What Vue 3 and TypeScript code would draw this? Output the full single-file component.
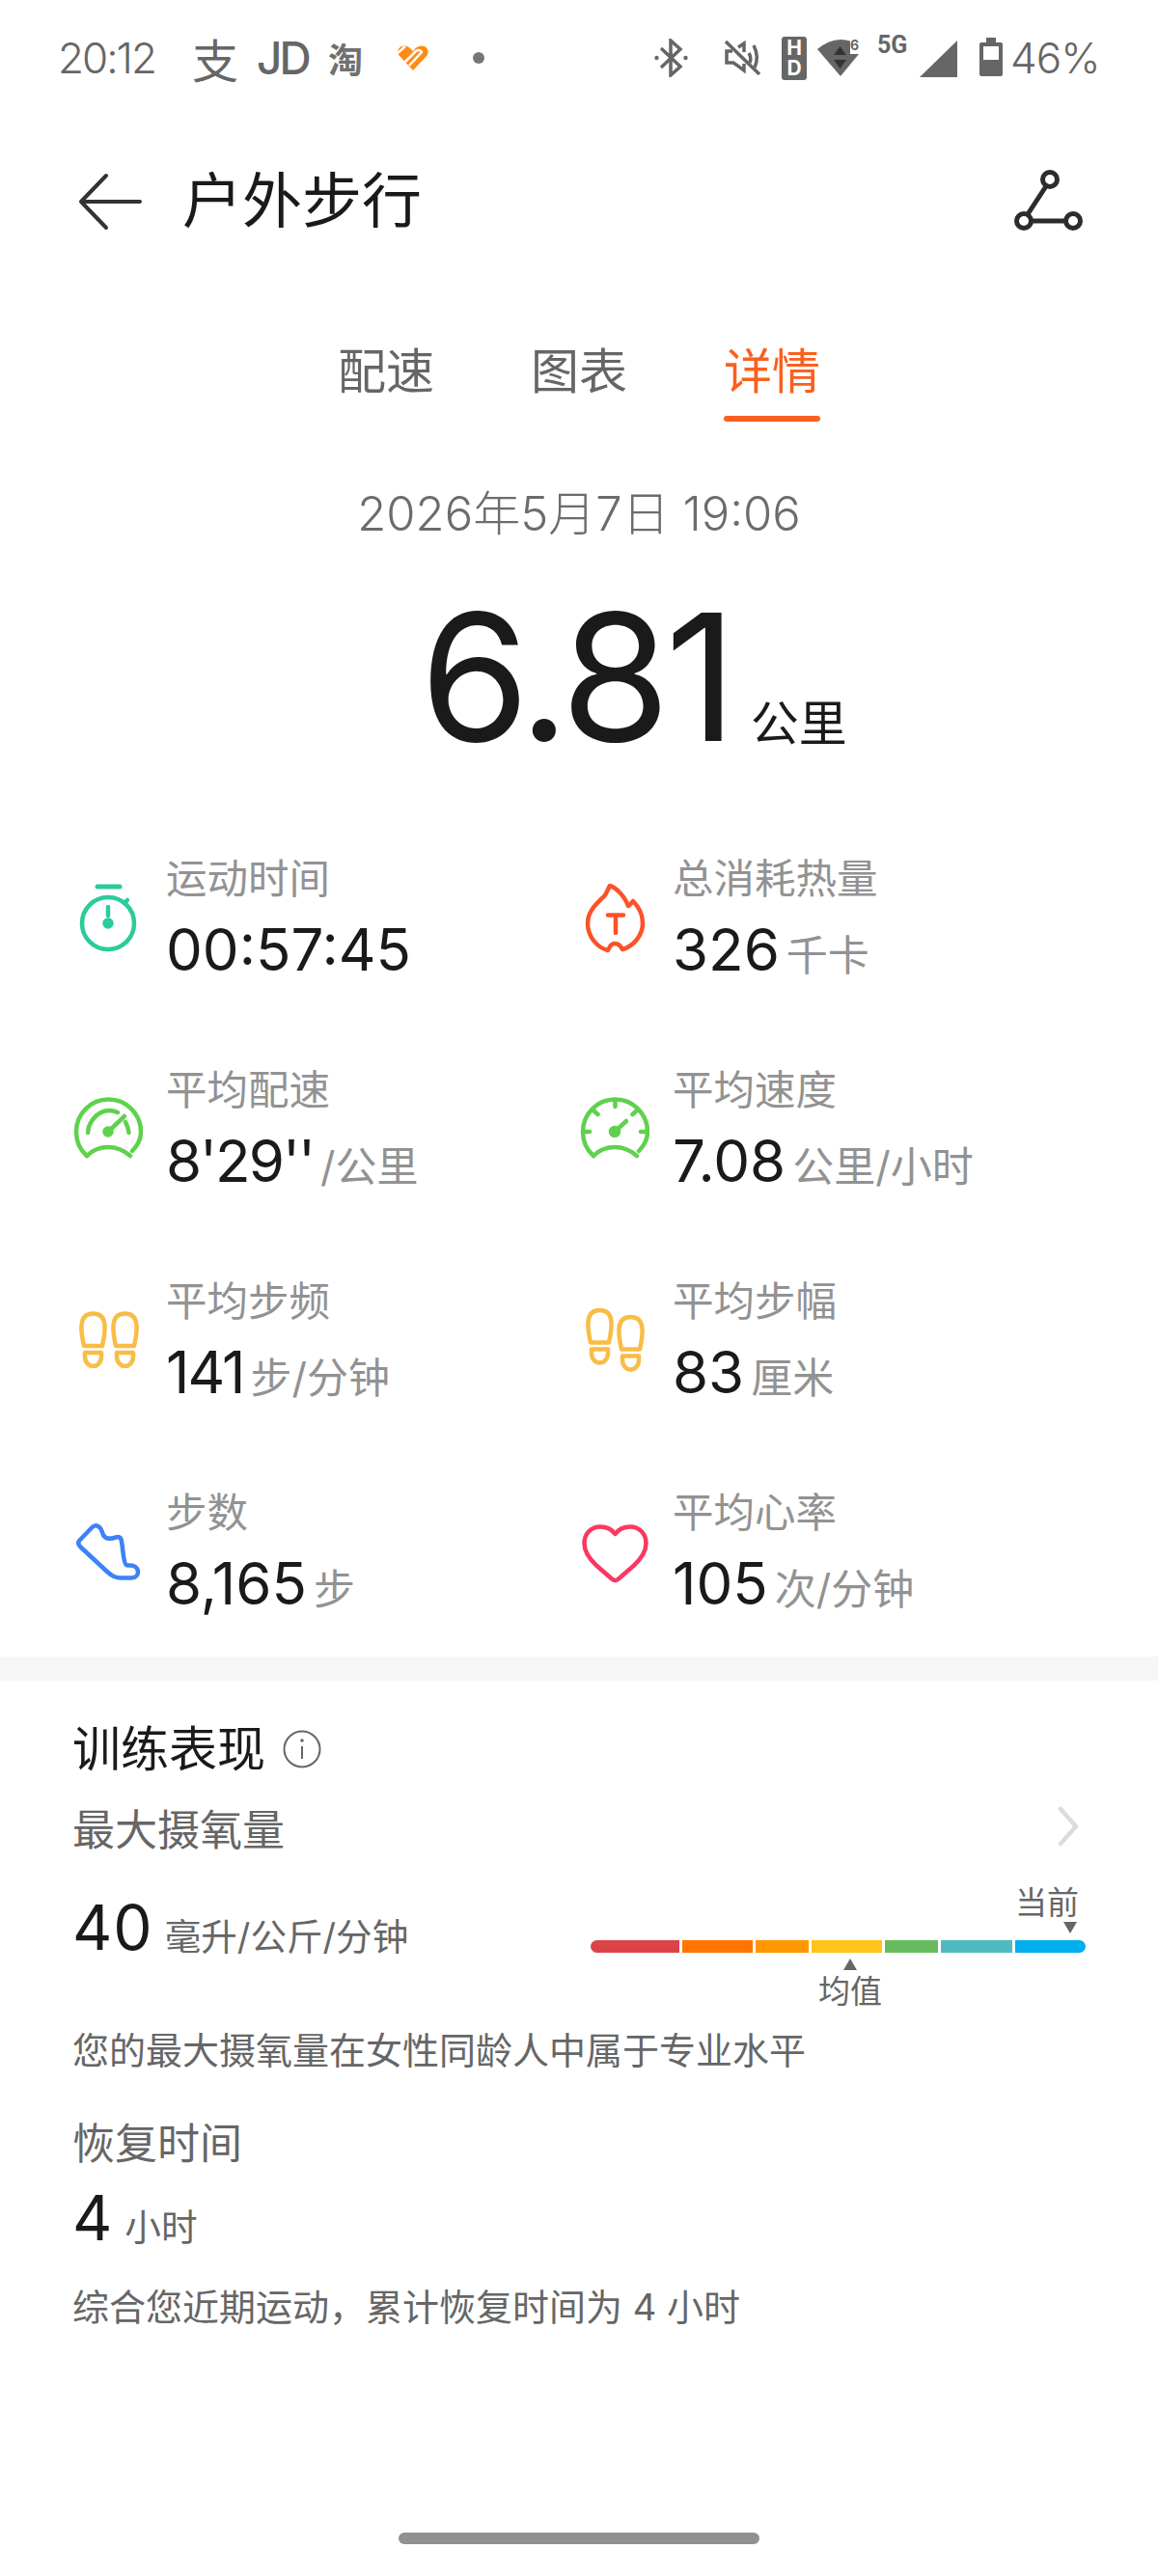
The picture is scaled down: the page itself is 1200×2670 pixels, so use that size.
<template>
  <div class="page">
    <!-- 状态栏 -->
    <div class="status">
      <div class="status-left">
        <span class="time">20:12</span>
        <span class="app-zhi">支</span>
        <span class="app-jd">JD</span>
        <span class="app-tao">淘</span>
        <svg class="app-heart" width="32" height="26" viewBox="0 0 32 26">
          <path d="M16 26 2 11C-2 6 2 .5 7 .5c3 0 5 1.500 7 3.500l2 2 2.500-3C20.500 1.500 22.500.5 25 .5c5 0 9 5.500 5 10.500z" fill="#ff8a14" />
          <path d="M-1 9 8 1M5 20 19 6c2-2 5-1 6 1L12 21" fill="none" stroke="#fff" stroke-width="2.500" />
        </svg>
        <span class="app-dot"></span>
      </div>
      <div class="status-right">
        <svg class="ic-bt" width="35" height="40" viewBox="0 0 35 40" fill="none" stroke="#666" stroke-width="3.500">
          <path d="M7 10 27 29 17 38V2l10 9L7 30" />
          <circle cx="2.500" cy="20" r="2.200" fill="#666" stroke="none" />
          <circle cx="32.500" cy="20" r="2.200" fill="#666" stroke="none" />
        </svg>
        <svg class="ic-mute" width="38" height="36" viewBox="0 0 38 36" fill="none" stroke="#666" stroke-width="3.500">
          <path d="M1 1 36 35" />
          <path d="M8 11H2V23H9L20 31V24M14 7l6-4V12" />
          <path d="M25 13q3 5 1 10M30 5q6 12 1 23" />
        </svg>
        <div class="ic-hd"><span>H</span><span>D</span></div>
        <svg class="ic-wifi" width="46" height="42" viewBox="0 0 46 42">
          <path d="M0 12Q12 2 24 2q6 0 10 1.500V17h9L24 40z" fill="#666" />
          <path d="M17 18 23.500 9 30 18zM17 23H30L23.500 32z" fill="#333" />
          <text x="34" y="13" class="wifi-six">6</text>
        </svg>
        <span class="ic-5g">5G</span>
        <svg class="ic-signal" width="39" height="38" viewBox="0 0 39 38"><path d="M0 38 39 0V38z" fill="#666" /></svg>
        <svg class="ic-batt" width="24" height="40" viewBox="0 0 24 40">
          <path d="M7 0H17V5H22q2 0 2 2V38q0 2-2 2H2q-2 0-2-2V7q0-2 2-2H7z" fill="#666" />
          <rect x="4" y="9" width="16" height="14" fill="#fff" />
        </svg>
        <span class="batt-text">46%</span>
      </div>
    </div>

    <!-- 标题栏 -->
    <div class="header">
      <svg class="back" width="66" height="60" viewBox="0 0 66 60" fill="none" stroke="#333" stroke-width="4" stroke-linecap="round" stroke-linejoin="round">
        <path d="M64 30H3M29 3 3 30l26 27" />
      </svg>
      <span class="title">户外步行</span>
      <svg class="route" width="72" height="72" viewBox="0 0 72 72" fill="none" stroke="#2c2c2c" stroke-width="5">
        <circle cx="38" cy="13" r="7.500" />
        <circle cx="11" cy="56" r="7.500" />
        <circle cx="62" cy="56" r="7.500" />
        <path d="M34 20 15 49M19 56H54" />
      </svg>
    </div>

    <!-- 标签 -->
    <div class="tabs">
      <div v-for="tab in tabs" :key="tab" class="tab" :class="{ active: tab === '详情' }">
        <span>{{ tab }}</span>
        <i class="tab-line"></i>
      </div>
    </div>

    <div class="date">2026年5月7日 19:06</div>
    <div class="hero">
      <span class="hero-num">6.81</span>
      <span class="hero-unit">公里</span>
    </div>

    <!-- 数据网格 -->
    <div class="grid">
      <div v-for="m in metrics" :key="m.label" class="cell">
        <svg class="cell-icon" width="72" height="72" viewBox="0 0 72 72" fill="none" stroke-linecap="round" stroke-linejoin="round">
          <g v-if="m.icon === 'timer'" stroke="#2ccb9b" stroke-width="4.500">
            <path d="M25 3H48" stroke-width="5" />
            <circle cx="36" cy="41" r="27" />
            <path d="M53 20l3-3M36 24v9" />
            <circle cx="36" cy="41" r="3.500" fill="#2ccb9b" />
          </g>
          <g v-else-if="m.icon === 'flame'" stroke="#fb5229" stroke-width="4.500">
            <path d="M31 2C36 3 46 12 50 23 52 22 53 20 55 18 61 24 65 32 65 41 65 54 55 65 44 68 42 64 39 62 36 62 33 62 31 64 29 69 17 66 8 54 8 41 8 28 18 20 25 13 28 10 29 5 31 2Z" />
            <path d="M29 32.500H45M37 32.500V51" />
          </g>
          <g v-else-if="m.icon === 'pace'" stroke="#5fd14d" stroke-width="4.500">
            <path d="M14 63C6 56 3 47 3 38a33.500 33.500 0 0 1 67 0C70 46 67 52 61 58" />
            <path d="M14 63C20 57 28 54 36 54S52 57 59 63" />
            <path d="M15 39C16 27 25 17 36 16 39 16 43 16.500 46 18M54 28Q57 33 57.500 39" />
            <path d="M36 38 53 22" />
            <circle cx="36" cy="38" r="3.500" fill="#5fd14d" />
          </g>
          <g v-else-if="m.icon === 'speed'" stroke="#5fd14d" stroke-width="4.500">
            <path d="M14 63C6 56 3 47 3 38a33.500 33.500 0 0 1 67 0C70 46 67 52 61 58" />
            <path d="M14 63C20 57 28 54 36 54S52 57 59 63" />
            <path d="M36.500 5v7M14 16l4.500 4M59 16l-4.500 4M3 38h7M70 38h-7" />
            <path d="M36 38 48 27" />
            <circle cx="36" cy="38" r="4" fill="#5fd14d" />
          </g>
          <g v-else-if="m.icon === 'steps'" stroke="#f8bd46" stroke-width="4.500">
            <g>
              <path d="M11 41C9 32 8 26 8.500 20 9 11 14 7.500 20.500 7.500S32 11 32.500 20C33 26 32 32 30 41Z" />
              <path d="M12 48H29V52C29 58 25 62 20.500 62S12 58 12 52Z" />
            </g>
            <g transform="translate(33 0)">
              <path d="M11 41C9 32 8 26 8.500 20 9 11 14 7.500 20.500 7.500S32 11 32.500 20C33 26 32 32 30 41Z" />
              <path d="M12 48H29V52C29 58 25 62 20.500 62S12 58 12 52Z" />
            </g>
          </g>
          <g v-else-if="m.icon === 'stride'" stroke="#f8bd46" stroke-width="4.500">
            <g transform="translate(0 -3.500)">
              <path d="M11 41C9 32 8 26 8.500 20 9 11 14 7.500 20.500 7.500S32 11 32.500 20C33 26 32 32 30 41Z" />
              <path d="M12 48H29V52C29 58 25 62 20.500 62S12 58 12 52Z" />
            </g>
            <g transform="translate(32 3.500)">
              <path d="M11 41C9 32 8 26 8.500 20 9 11 14 7.500 20.500 7.500S32 11 32.500 20C33 26 32 32 30 41Z" />
              <path d="M12 48H29V52C29 58 25 62 20.500 62S12 58 12 52Z" />
            </g>
          </g>
          <path v-else-if="m.icon === 'shoe'" stroke="#3d82f6" stroke-width="4.500" d="M19 10.500 6 24Q4 27 7 30L35 56C39.500 60 43 62.500 50 62.500H60C65 62.500 67 59 67 56.500 67 52 63 49.500 59 49.500H56C52 49.500 51.500 33 50 25 49.500 20 47 19.500 44 20.500 38 22.500 33 22 31 18 29 12 28 9.500 24.500 8.500 22.500 8 20.500 9 19 10.500Z" />
          <path v-else stroke="#fb3860" stroke-width="4.500" d="M36.500 17C33 12 27 9.500 21 9.500 11 9.500 4.500 17 4.500 26.500 4.500 36 10 43 17 49.500L33 63.500Q36.500 66.500 40 63.500L56 49.500C63 43 68.500 36 68.500 26.500 68.500 17 62 9.500 52 9.500 46 9.500 40 12 36.500 17Z" />
        </svg>
        <div class="cell-text">
          <div class="cell-label">{{ m.label }}</div>
          <div class="cell-value">
            <span class="num" :class="{ tight: m.tight }">{{ m.value }}</span>
            <span v-if="m.unit" class="cell-unit">{{ m.unit }}</span>
          </div>
        </div>
      </div>
    </div>

    <div class="divider"></div>

    <!-- 训练表现 -->
    <div class="perf">
      <div class="perf-head">
        <span>训练表现</span>
        <svg width="40" height="40" viewBox="0 0 40 40" fill="none" stroke="#666" stroke-width="2">
          <circle cx="20" cy="20" r="18.500" />
          <path d="M20 17V30" />
          <circle cx="20" cy="11" r="1.800" fill="#666" stroke="none" />
        </svg>
      </div>
      <div class="perf-row">
        <span class="perf-label">最大摄氧量</span>
        <svg class="chevron" width="22" height="42" viewBox="0 0 22 42" fill="none" stroke="#dcdcdc" stroke-width="4.500" stroke-linecap="round" stroke-linejoin="round">
          <path d="M3 3 19 21 3 39" />
        </svg>
      </div>
      <div class="vo2">
        <div class="perf-value vo2-value">
          <span class="num">40</span>
          <span class="perf-unit">毫升/公斤/分钟</span>
        </div>
        <div class="scale">
          <div class="scale-now">
            <span>当前</span>
            <i class="tri-down"></i>
          </div>
          <div class="scale-bar">
            <i v-for="seg in segments" :key="seg.color" :style="{ flexGrow: seg.grow, background: seg.color }"></i>
          </div>
          <div class="scale-avg">
            <i class="tri-up"></i>
            <span>均值</span>
          </div>
        </div>
      </div>
      <div class="perf-desc first">您的最大摄氧量在女性同龄人中属于专业水平</div>

      <div class="perf-label recover">恢复时间</div>
      <div class="perf-value recover-value">
        <span class="num">4</span>
        <span class="perf-unit">小时</span>
      </div>
      <div class="perf-desc last">综合您近期运动，累计恢复时间为 4 小时</div>
    </div>

    <div class="home-bar"></div>
  </div>
</template>

<script setup lang="ts">
interface Metric {
  icon: string;
  label: string;
  value: string;
  unit?: string;
  tight?: boolean;
}

const tabs = ['配速', '图表', '详情'];

const metrics: Metric[] = [
  { icon: 'timer', label: '运动时间', value: '00:57:45' },
  { icon: 'flame', label: '总消耗热量', value: '326', unit: '千卡' },
  { icon: 'pace', label: '平均配速', value: "8'29''", unit: '/公里', tight: true },
  { icon: 'speed', label: '平均速度', value: '7.08', unit: '公里/小时' },
  { icon: 'steps', label: '平均步频', value: '141', unit: '步/分钟', tight: true },
  { icon: 'stride', label: '平均步幅', value: '83', unit: '厘米' },
  { icon: 'shoe', label: '步数', value: '8,165', unit: '步' },
  { icon: 'heart', label: '平均心率', value: '105', unit: '次/分钟' },
];

const segments = [
  { grow: 5, color: '#db4348' },
  { grow: 4, color: '#ff7500' },
  { grow: 3, color: '#ff9800' },
  { grow: 4, color: '#ffc31a' },
  { grow: 3, color: '#66bb5f' },
  { grow: 4, color: '#4fbbc1' },
  { grow: 4, color: '#00aeef' },
];
</script>

<style>
html,
body {
  margin: 0;
  background: #fff;
}
</style>

<style scoped>
.page {
  width: 1200px;
  height: 2670px;
  overflow: hidden;
  background: #fff;
  color: #1a1a1a;
  font-family: Inter, "Noto Sans CJK SC", sans-serif;
}

.num {
  font-family: Inter, sans-serif;
}

/* 状态栏 */
.status {
  height: 120px;
  padding: 0 63px 0 60px;
  display: flex;
  justify-content: space-between;
  align-items: center;
  color: #666;
}

.status-left,
.status-right {
  display: flex;
  align-items: center;
}

.time {
  width: 101px;
  font-size: 44px;
  font-weight: 300;
  letter-spacing: -2px;
  white-space: nowrap;
}

.app-zhi {
  margin-left: 38px;
  width: 47px;
  font-size: 48px;
  line-height: 50px;
  font-family: "Noto Sans CJK SC", sans-serif;
}

.app-jd {
  margin-left: 20px;
  width: 47px;
  font-size: 46px;
  font-weight: 500;
  letter-spacing: -3px;
  white-space: nowrap;
}

.app-tao {
  margin-left: 27px;
  width: 37px;
  font-size: 36px;
  font-weight: 700;
  color: #707070;
  font-family: "Noto Sans CJK SC", sans-serif;
}

.app-heart {
  margin-left: 35px;
}

.app-dot {
  margin-left: 46px;
  width: 12px;
  height: 12px;
  border-radius: 50%;
  background: #777;
}

.ic-mute {
  margin-left: 38px;
}

.ic-hd {
  margin-left: 21px;
  width: 26px;
  height: 45px;
  border-radius: 3px;
  background: #666;
  color: #fff;
  display: flex;
  flex-direction: column;
  align-items: center;
  font-size: 21px;
  line-height: 21px;
  font-weight: 700;
  padding-top: 1px;
  box-sizing: border-box;
}

.ic-wifi {
  margin-left: 11px;
}

.wifi-six {
  font-size: 14px;
  font-weight: 700;
  fill: #666;
}

.ic-5g {
  margin-left: 16px;
  width: 36px;
  align-self: flex-start;
  font-family: Roboto, sans-serif;
  font-size: 25px;
  line-height: 28px;
  font-weight: 700;
  white-space: nowrap;
}

.ic-signal {
  margin-left: 8px;
  margin-top: 2px;
}

.ic-batt {
  margin-left: 23px;
  margin-top: -2px;
}

.batt-text {
  margin-left: 8px;
  width: 90px;
  font-size: 44px;
  font-weight: 300;
  letter-spacing: -1px;
  white-space: nowrap;
}

/* 标题栏 */
.header {
  margin-top: 29px;
  height: 120px;
  padding: 0 78px 0 81px;
  display: flex;
  align-items: center;
}

.title {
  margin-left: 42px;
  flex: 1;
  font-size: 62px;
  line-height: 80px;
}

/* 标签 */
.tabs {
  margin-top: 82px;
  display: flex;
  justify-content: center;
  gap: 100px;
}

.tab {
  width: 100px;
  display: flex;
  flex-direction: column;
  align-items: center;
  font-size: 50px;
  line-height: 68px;
  color: #666;
}

.tab-line {
  margin-top: 12px;
  width: 100px;
  height: 6px;
  border-radius: 3px;
}

.tab.active {
  color: #f9601f;
}

.tab.active .tab-line {
  background: #f9601f;
}

.date {
  margin-top: 66px;
  text-align: center;
  font-size: 49px;
  line-height: 60px;
  font-weight: 300;
  color: #6c6c6c;
}

.hero {
  margin-top: 44px;
  padding-left: 113px;
  display: flex;
  justify-content: center;
  align-items: baseline;
  gap: 19px;
}

.hero-num {
  font-size: 183px;
  line-height: 190px;
  font-weight: 400;
  letter-spacing: -5px;
}

.hero-unit {
  font-size: 50px;
}

/* 数据网格 */
.grid {
  margin-top: 86px;
  padding: 0 0 40px 76px;
  display: grid;
  grid-template-columns: 525px 525px;
  row-gap: 82px;
}

.cell {
  height: 137px;
  display: flex;
  align-items: center;
  gap: 24px;
}

.cell-label {
  font-size: 42.5px;
  line-height: 56px;
  color: #929292;
}

.cell-value {
  margin-top: 9px;
  display: flex;
  align-items: baseline;
  gap: 7px;
  height: 72px;
  white-space: nowrap;
}

.cell-value .num {
  font-size: 60px;
  line-height: 72px;
}

.cell-value .num.tight {
  letter-spacing: -2px;
}

.cell-unit {
  font-size: 43px;
  color: #929292;
}

.divider {
  height: 25px;
  background: #f6f6f6;
}

/* 训练表现 */
.perf {
  padding: 39px 75px 0 75px;
}

.perf-head {
  display: flex;
  align-items: center;
  gap: 18px;
  font-size: 50px;
  line-height: 64px;
}

.perf-row {
  margin-top: 24px;
  display: flex;
  justify-content: space-between;
}

.perf-label {
  font-size: 44px;
  line-height: 56px;
  color: #666;
}

.chevron {
  margin-top: 3px;
  margin-right: 7px;
}

.vo2 {
  margin-top: 27px;
  display: flex;
  justify-content: space-between;
  align-items: flex-start;
}

.perf-value {
  display: flex;
  align-items: baseline;
  gap: 12px;
  white-space: nowrap;
}

.perf-value .num {
  font-size: 64px;
  line-height: 72px;
  letter-spacing: 1px;
}

.perf-unit {
  font-size: 37.6px;
  color: #666;
}

.vo2-value {
  margin-top: 10px;
}

.scale {
  width: 513px;
  font-size: 33px;
  line-height: 40px;
  color: #666;
}

.scale-now {
  display: flex;
  flex-direction: column;
  align-items: flex-end;
  padding-right: 7px;
}

.tri-down {
  margin-right: 2px;
  width: 0;
  height: 0;
  border: 7px solid transparent;
  border-top: 12px solid #666;
  border-bottom: 0;
}

.scale-bar {
  margin-top: 7px;
  height: 13px;
  display: flex;
  gap: 3px;
  border-radius: 7px;
  overflow: hidden;
}

.scale-bar i {
  flex-basis: 0;
}

.scale-avg {
  margin-top: 6px;
  margin-left: 236px;
  width: 66px;
  display: flex;
  flex-direction: column;
  align-items: center;
}

.tri-up {
  width: 0;
  height: 0;
  border: 7px solid transparent;
  border-bottom: 12px solid #666;
  border-top: 0;
}

.scale-avg span {
  margin-top: 2px;
}

.perf-desc {
  font-size: 38px;
  line-height: 50px;
  color: #666;
  white-space: pre;
}

.perf-desc.first {
  margin-top: 16px;
}

.recover {
  margin-top: 44px;
}

.recover-value {
  margin-top: 13px;
}

.perf-desc.last {
  margin-top: 31px;
}

.home-bar {
  margin: 209px auto 0;
  width: 374px;
  height: 12px;
  border-radius: 6px;
  background: #919191;
}
</style>
